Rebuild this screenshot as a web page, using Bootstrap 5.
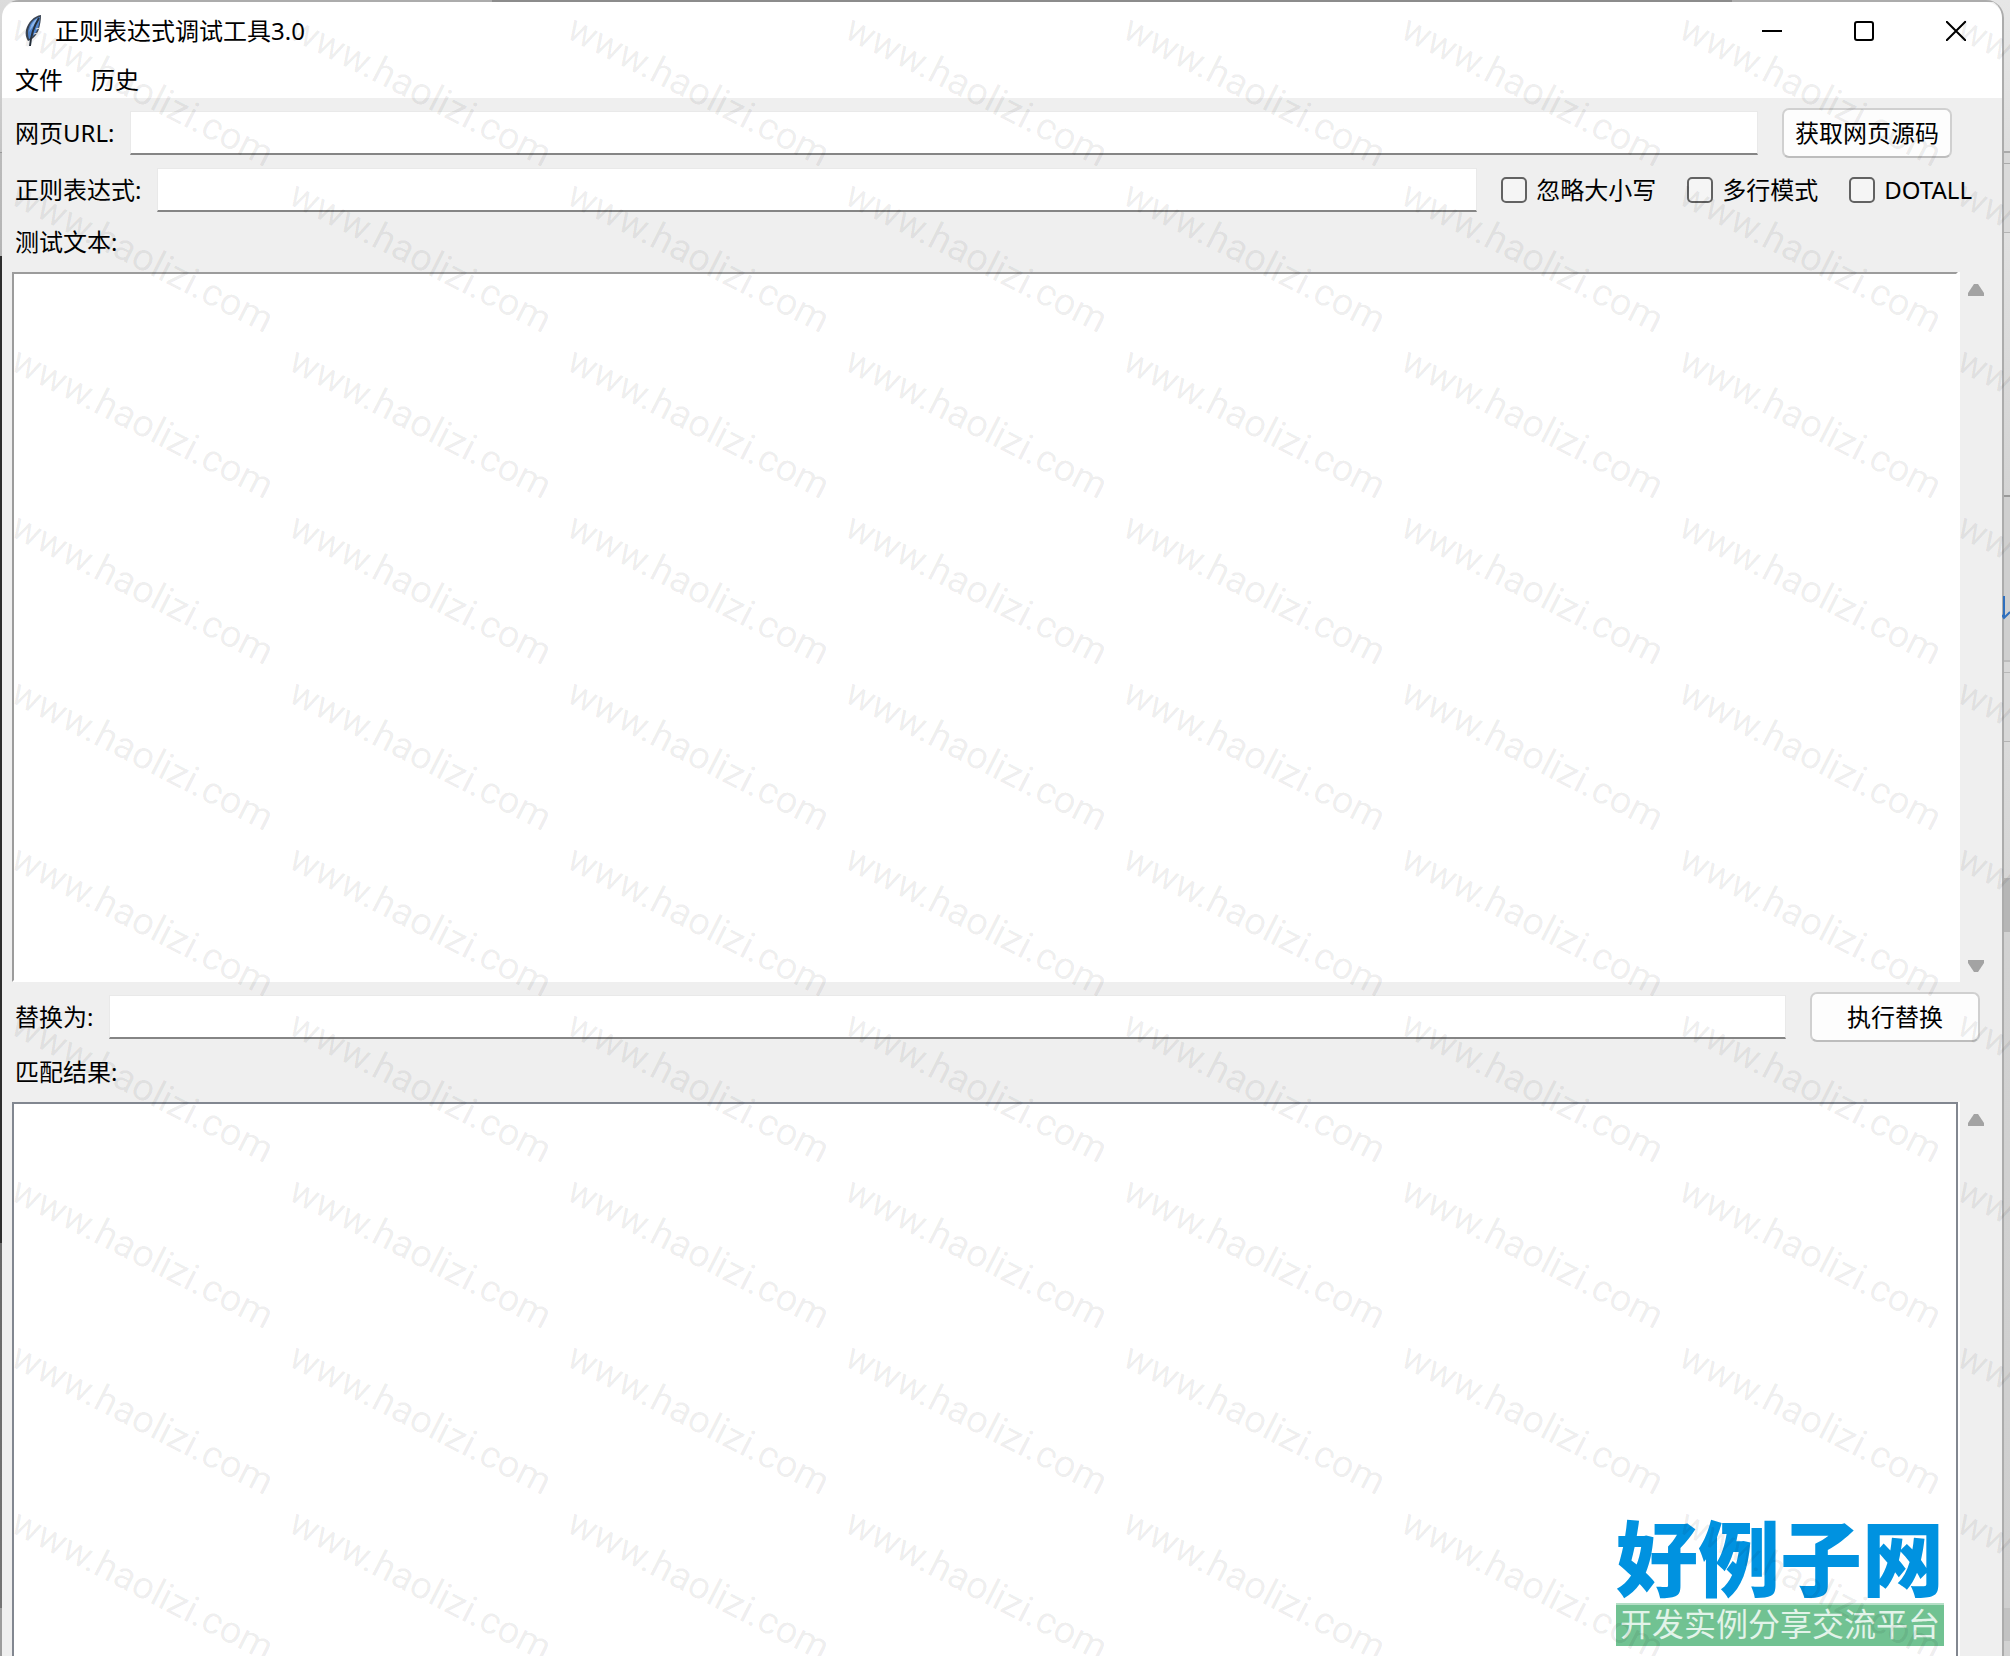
<!DOCTYPE html>
<html lang="zh-CN">
<head>
<meta charset="utf-8">
<meta name="viewport" content="width=device-width, initial-scale=1">
<title>正则表达式调试工具3.0</title>
<link href="https://cdn.jsdelivr.net/npm/bootstrap@5.3.0/dist/css/bootstrap.min.css" rel="stylesheet">
<style>
  html { height: 100%; overflow: hidden; }
  body {
    position: relative;
    height: 100%;
    overflow: hidden;
    font-family: "Noto Sans", "Noto Sans CJK SC", sans-serif;
    font-size: 24px;
    line-height: 32px;
    color: #000;
    background: #d6d6d6;
  }
  /* slivers of the desktop on both sides of the window */
  .edge-left, .edge-right { position: absolute; top: 0; bottom: 0; z-index: 0; }
  .edge-left {
    left: 0; width: 16px;
    background: linear-gradient(#dcdcdc 0, #c4c4c4 152px, #999 152px, #999 153px, #bbb 153px, #b4b4b4 256px,
      #2e2e2e 256px, #2e2e2e 1243px, #686868 1243px, #747474 1608px, #9c9c9c 1608px);
  }
  .edge-right {
    right: 0; width: 24px;
    background: linear-gradient(#e6e6e6 0, #dedede 151px, #aaa 151px, #aaa 153px, #d8d8d8 153px, #d8d8d8 163px,
      #aaa 163px, #aaa 164px, #dadada 164px, #dadada 232px, #b4b4b4 232px, #b4b4b4 233px, #e0e0e0 233px, #d4d4d4 495px,
      #999 495px, #999 497px, #cfcfcf 497px, #cfcfcf 660px, #bcbcbc 660px, #bcbcbc 662px, #d8d8d8 662px,
      #d8d8d8 672px, #b8b8b8 672px, #b8b8b8 673px, #d8d8d8 673px, #d8d8d8 741px, #b4b4b4 741px, #b4b4b4 742px,
      #dadada 742px, #d6d6d6 878px, #b6b6b6 878px, #b6b6b6 932px, #d2d2d2 932px, #cfcfcf 1608px,
      #c2c2c2 1608px, #c2c2c2 1641px, #d2d2d2 1641px);
  }
  .edge-mark { position: absolute; right: 0; top: 595px; width: 8px; height: 26px; z-index: 2; }

  .app-window {
    position: relative; z-index: 1;
    min-height: 100%;
    margin: 0 6px 0 2px;
    padding-top: 2px;
    border-right: 2px solid #acacac;
    border-radius: 17px 18px 0 0;
    background: linear-gradient(#acacac, #acacac) top / 100% 2px no-repeat, #efefef;
    overflow: hidden;
  }
  .edge-dark { position: absolute; top: 0; left: 490px; right: 270px; height: 2px; background: #8c8c8c; z-index: 2; }
  .title-bar { height: 58px; padding-left: 21px; background: #fff; border-radius: 15px 16px 0 0; }
  .title-bar h1 { font-size: 24px; line-height: 32px; font-weight: 400; color: #000; }
  .feather { width: 20px; height: 34px; }
  .win-btn { width: 92px; height: 58px; padding: 0 0 4px; border: 0; background: none; line-height: 1; }
  .menu-bar { height: 38px; padding: 2px 0 0 13px; gap: 28px; background: #fff; }
  .menu-bar a { color: #000; text-decoration: none; }

  .field-row { min-height: 50px; margin-top: 10px; padding-left: 13px; }
  .field-row label, .area-label { white-space: nowrap; }
  .line-box.form-control {
    height: 44px; margin: 0 24px 0 16px; padding: 0 6px;
    font-size: 24px; color: #000; background: #fff;
    border: 1px solid #e9e9e9; border-bottom: 2px solid #858585; border-radius: 0;
  }
  .soft-btn.btn {
    width: 170px; height: 50px; padding: 0;
    font-size: 24px; line-height: 32px; color: #000;
    background: #fdfdfd; border: 2px solid #d0d0d0; border-bottom-color: #bdbdbd; border-radius: 7px;
  }
  .row-url { padding-right: 50px; }
  .row-regex { min-height: 44px; padding-right: 30px; }
  .row-replace { padding-right: 22px; }
  .check-set { gap: 31px; }
  .check-set .form-check-input {
    flex: none; float: none; width: 26px; height: 26px; margin: 0 9px 0 0;
    background-color: #f5f5f5; border: 2px solid #626262; border-radius: 5px;
  }
  .area-label { display: block; height: 60px; line-height: 60px; padding-left: 13px; }
  .area-row { padding-left: 10px; }
  .text-box {
    flex: 1 1 auto; min-width: 0; display: block; padding: 6px; resize: none;
    background: #fff; border: 2px solid #9c9c9c; outline: 0; border-radius: 0; overflow: hidden;
  }
  .source-row { height: 710px; }
  .source-row .text-box { border-right-color: #fff; border-bottom-color: #fff; margin-right: 2px; box-shadow: 2px 0 #fff; }
  .result-row { flex: 1 0 554px; }
  .result-row .text-box { border-color: #828790; border-bottom: 0; margin-right: 2px; box-shadow: 2px 0 #fff; }
  .scroll-track { flex: none; width: 42px; padding: 12px 18px 10px 8px; }
  .scroll-track svg { width: 16px; height: 12px; display: block; }

  .site-logo { position: absolute; right: 66px; bottom: 10px; width: 328px; z-index: 3; }
  .site-name { display: block; padding-bottom: 6px; font: 900 82px/84px "Noto Sans CJK SC", sans-serif; color: #0092e0; white-space: nowrap; }
  .site-line { display: block; height: 43px; background: #71c292; border-top: 2px solid #b5dfc6; text-align: center;
    font: 400 32px/34px "Noto Sans CJK SC", sans-serif; color: #e2f3e9; white-space: nowrap; }

  .watermark {
    position: absolute; inset: 0; z-index: 5; overflow: hidden; pointer-events: none;
    display: grid; grid-template-columns: repeat(8, 278px); grid-auto-rows: 166px;
  }
  .watermark span {
    padding-left: 9px; width: 300px; white-space: nowrap;
    font: 400 38px/48px Roboto, sans-serif; color: rgba(0, 0, 0, .07);
    transform-origin: 9px 36px; transform: rotate(27deg);
  }
</style>
</head>
<body>
<div class="edge-left"></div>
<div class="edge-right"></div>

<main class="app-window d-flex flex-column">
  <div class="edge-dark"></div>
  <header class="title-bar d-flex align-items-center">
    <svg class="feather" viewBox="0 0 20 34" aria-hidden="true">
      <path d="M18 1C11 2 5 8 3 16c-1 4 0 8 2 11 5-2 9-6 11-12 1-4 2-9 2-14z" fill="#3a4452"/>
      <path d="M17 3C11 4 6 10 5 17c0 3 0 5 1 8 4-2 7-6 9-11 1-4 2-8 2-11z" fill="#5086cf"/>
      <path d="M15 4C10 7 7 12 6 18l5-7z" fill="#8fb8ec"/>
      <path d="M16 4C11 12 8 20 7 32" fill="none" stroke="#26303c" stroke-width="2"/>
      <path d="M13 15l4-1M11 20l4-1" stroke="#e4e4e4" stroke-width="1"/>
    </svg>
    <h1 class="mb-0 ms-2 ps-1 me-auto">正则表达式调试工具3.0</h1>
    <button class="win-btn" type="button" aria-label="最小化"><svg width="20" height="20" viewBox="0 0 20 20"><path d="M0 10h20" stroke="#000" stroke-width="2"/></svg></button>
    <button class="win-btn" type="button" aria-label="最大化"><svg width="20" height="20" viewBox="0 0 20 20"><rect x="1" y="1" width="18" height="18" rx="2" fill="none" stroke="#000" stroke-width="2"/></svg></button>
    <button class="win-btn" type="button" aria-label="关闭"><svg width="20" height="20" viewBox="0 0 20 20"><path d="M0 0l20 20M20 0L0 20" stroke="#000" stroke-width="2"/></svg></button>
  </header>
  <nav class="menu-bar d-flex align-items-center">
    <a href="#">文件</a>
    <a href="#">历史</a>
  </nav>

  <div class="field-row row-url d-flex align-items-center">
    <label for="url">网页URL:</label>
    <input class="form-control line-box" id="url" type="text">
    <button class="btn soft-btn flex-shrink-0" type="button">获取网页源码</button>
  </div>
  <div class="field-row row-regex d-flex align-items-center">
    <label for="regex">正则表达式:</label>
    <input class="form-control line-box" id="regex" type="text">
    <div class="check-set d-flex align-items-center flex-shrink-0">
      <div class="d-flex align-items-center"><input class="form-check-input" type="checkbox" id="icase"><label for="icase">忽略大小写</label></div>
      <div class="d-flex align-items-center"><input class="form-check-input" type="checkbox" id="multi"><label for="multi">多行模式</label></div>
      <div class="d-flex align-items-center"><input class="form-check-input" type="checkbox" id="dotall"><label for="dotall">DOTALL</label></div>
    </div>
  </div>

  <label class="area-label" for="source">测试文本:</label>
  <div class="area-row source-row d-flex">
    <textarea class="text-box" id="source"></textarea>
    <div class="scroll-track d-flex flex-column justify-content-between">
      <svg viewBox="0 0 16 12"><path d="M6 0h4L16 9v3H0V9z" fill="#a3a3a3"/></svg>
      <svg viewBox="0 0 16 12"><path d="M6 12h4L16 3V0H0v3z" fill="#a3a3a3"/></svg>
    </div>
  </div>

  <div class="field-row row-replace d-flex align-items-center">
    <label for="replace">替换为:</label>
    <input class="form-control line-box" id="replace" type="text">
    <button class="btn soft-btn flex-shrink-0" type="button">执行替换</button>
  </div>

  <label class="area-label" for="result">匹配结果:</label>
  <div class="area-row result-row d-flex">
    <textarea class="text-box" id="result"></textarea>
    <div class="scroll-track">
      <svg viewBox="0 0 16 12"><path d="M6 0h4L16 9v3H0V9z" fill="#a3a3a3"/></svg>
    </div>
  </div>
</main>

<svg class="edge-mark" viewBox="0 0 8 26" aria-hidden="true"><path d="M2 1v22M0 20l2 3 6-6" fill="none" stroke="#2f6fbd" stroke-width="2"/></svg>

<div class="site-logo">
  <span class="site-name">好例子网</span>
  <span class="site-line">开发实例分享交流平台</span>
</div>

<div class="watermark" id="watermark" aria-hidden="true"></div>

<script src="https://cdn.jsdelivr.net/npm/bootstrap@5.3.0/dist/js/bootstrap.bundle.min.js"></script>
<script>
  const layer = document.getElementById('watermark');
  for (let i = 0; i < 80; i++) {
    const tile = document.createElement('span');
    tile.textContent = 'www.haolizi.com';
    layer.appendChild(tile);
  }
</script>
</body>
</html>
